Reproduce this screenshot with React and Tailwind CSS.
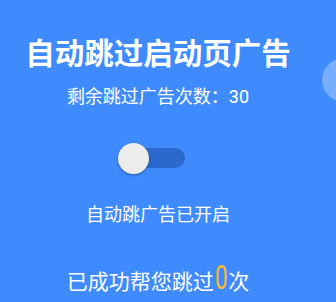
import React from "react";

export default function App() {
  const font = { fontFamily: 'Roboto, "Noto Sans CJK SC", sans-serif' };
  return (
    <div
      className="relative w-[336px] h-[302px] overflow-hidden bg-[#3f8bfd] text-white"
      style={font}
    >
      <div className="absolute left-[322px] top-[58px] w-[44px] h-[44px] rounded-full bg-white/30" />
      <div className="w-[316px] flex flex-col items-center text-center pt-[36px]">
        <div className="text-[29.5px] leading-[36px] font-bold whitespace-nowrap">
          自动跳过启动页广告
        </div>
        <div className="mt-[13px] text-[18px] leading-[24px] whitespace-nowrap">
          剩余跳过广告次数：30
        </div>
        <div className="self-start mt-[34px] ml-[118px] relative w-[67px] h-[32px]">
          <div className="absolute left-[16px] right-0 top-[5px] h-[20px] rounded-full bg-[#2b69cf]" />
          <div className="absolute left-0 top-0 w-[31px] h-[31px] rounded-full bg-[#ececec] shadow-[0_1px_3px_rgba(0,0,0,0.35)]" />
        </div>
        <div className="mt-[28px] text-[18px] leading-[24px] whitespace-nowrap">
          自动跳广告已开启
        </div>
        <div className="mt-[37px] text-[21px] leading-[28px] whitespace-nowrap flex items-baseline">
          <span>已成功帮您跳过</span>
          <span className="inline-block text-[#fbb934] text-[33px] leading-[28px] font-normal scale-x-[0.68] mx-[-2px]">
            0
          </span>
          <span>次</span>
        </div>
      </div>
    </div>
  );
}
